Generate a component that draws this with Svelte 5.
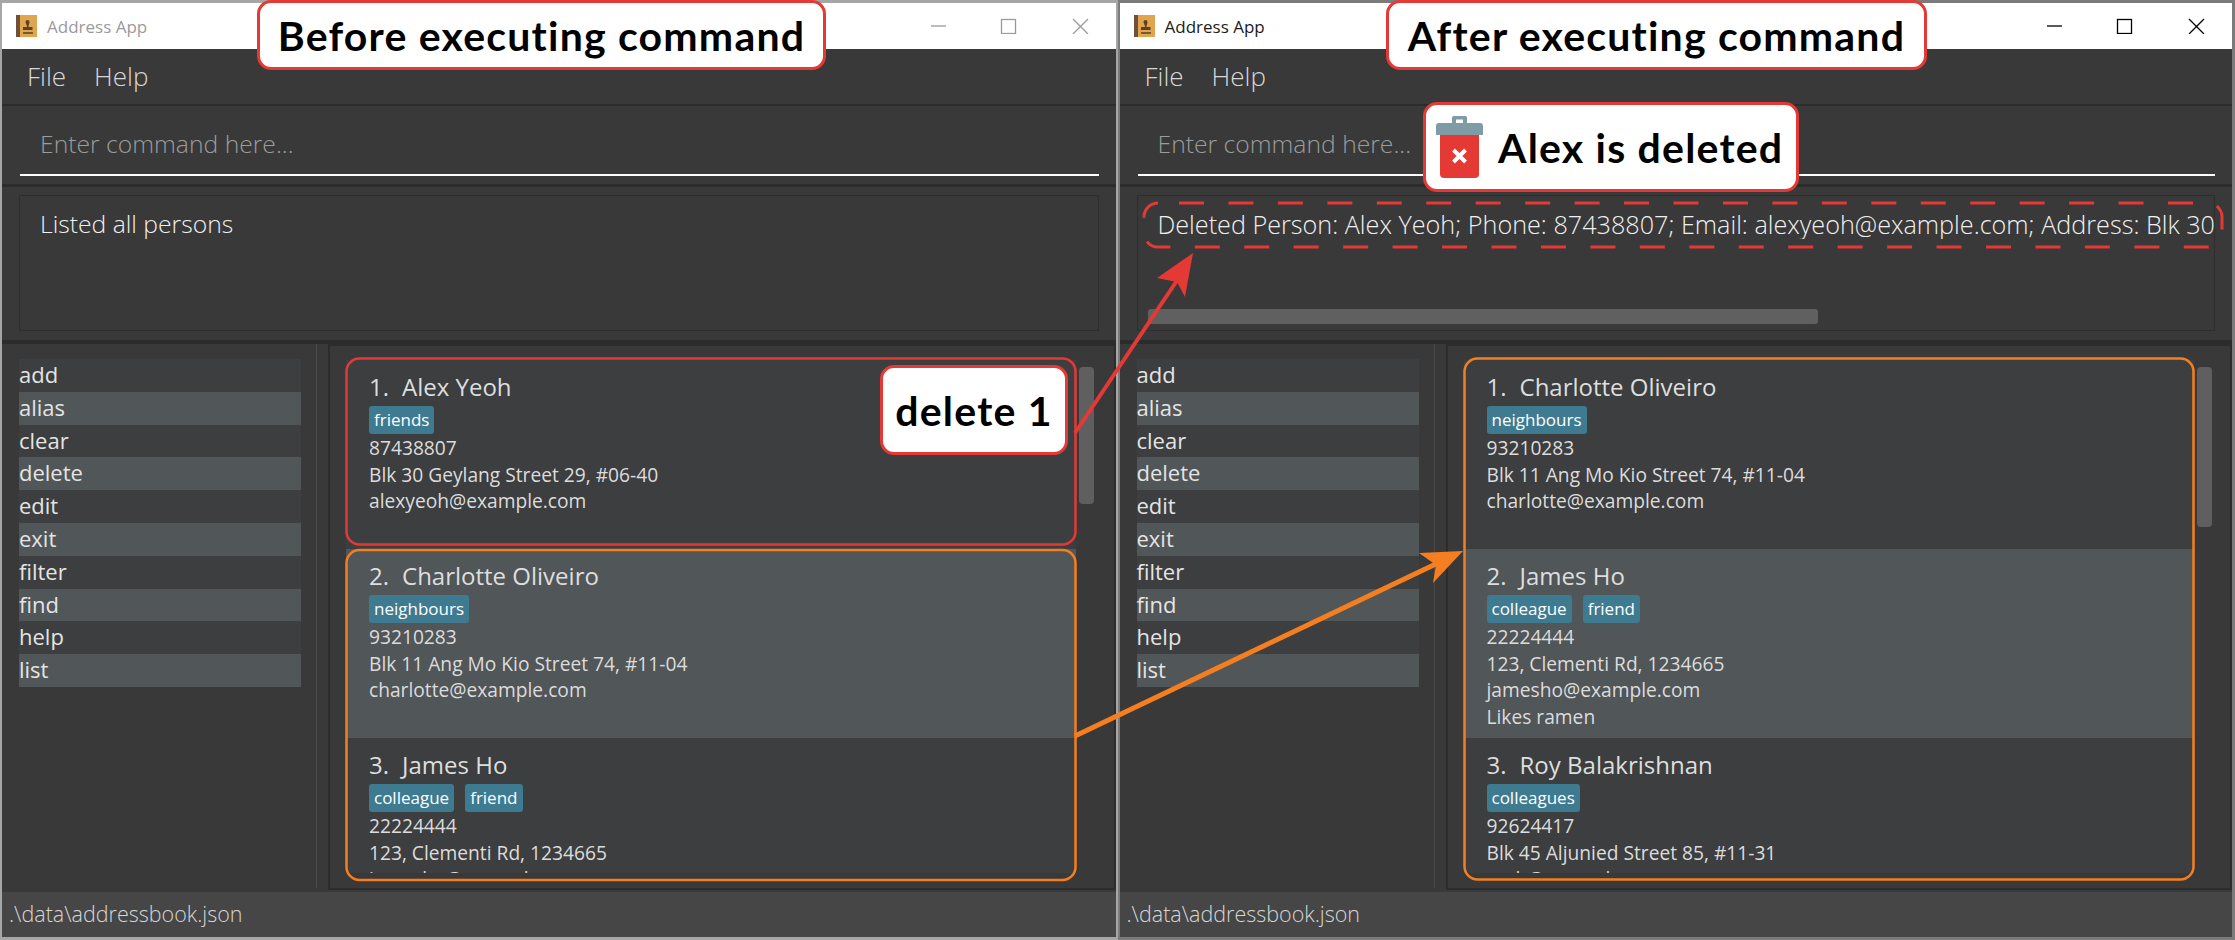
<script lang="ts">
    type Person = { name: string; tags: string[]; lines: string[] };

    const commands = ['add', 'alias', 'clear', 'delete', 'edit', 'exit', 'filter', 'find', 'help', 'list'];

    const alex: Person = {
        name: 'Alex Yeoh',
        tags: ['friends'],
        lines: ['87438807', 'Blk 30 Geylang Street 29, #06-40', 'alexyeoh@example.com']
    };
    const charlotte: Person = {
        name: 'Charlotte Oliveiro',
        tags: ['neighbours'],
        lines: ['93210283', 'Blk 11 Ang Mo Kio Street 74, #11-04', 'charlotte@example.com']
    };
    const james: Person = {
        name: 'James Ho',
        tags: ['colleague', 'friend'],
        lines: ['22224444', '123, Clementi Rd, 1234665', 'jamesho@example.com', 'Likes ramen']
    };
    const roy: Person = {
        name: 'Roy Balakrishnan',
        tags: ['colleagues'],
        lines: ['92624417', 'Blk 45 Aljunied Street 85, #11-31', 'royb@example.com']
    };

    const before = {
        active: false,
        message: 'Listed all persons',
        scrolled: false,
        thumb: 137,
        people: [alex, charlotte, james]
    };
    const after = {
        active: true,
        message: 'Deleted Person: Alex Yeoh; Phone: 87438807; Email: alexyeoh@example.com; Address: Blk 30 Geylang Street 29, #06-40; Tags: [friends]',
        scrolled: true,
        thumb: 160,
        people: [charlotte, james, roy]
    };
</script>

{#snippet appWindow(win)}
    <section class="window" class:active={win.active}>
        <header class="titlebar">
            <svg class="app-icon" viewBox="0 0 21 22" width="21" height="22">
                <rect width="21" height="22" fill="#e0a64f" />
                <rect width="4" height="22" fill="#6e5138" />
                <path d="M11.5 5a2 2 0 0 1 2 2c0 1.5-1 2.500-1 5h4v3H7v-3h4c0-2.500-1.500-3.500-1.500-5a2 2 0 0 1 2-2z" fill="#5d4321" />
                <rect x="7" y="17" width="10" height="2" fill="#7b5a2d" />
            </svg>
            <span class="app-title">Address App</span>
            <svg class="controls" viewBox="0 0 158 16" width="158" height="16">
                <path d="M0 8h15" />
                <rect x="70.500" y="1.500" width="14" height="14" />
                <path d="M142 1l15 15M157 1l-15 15" />
            </svg>
        </header>

        <nav class="menubar">
            <span>File</span>
            <span>Help</span>
        </nav>

        <div class="command">
            <div class="command-input">Enter command here...</div>
        </div>

        <div class="result">
            <div class="result-box">
                <div class="message">{win.message}</div>
                {#if win.scrolled}<div class="hthumb"></div>{/if}
            </div>
        </div>

        <div class="lower">
            <aside class="sidebar">
                {#each commands as c}
                    <div class="cmd">{c}</div>
                {/each}
            </aside>
            <div class="panel">
                <div class="people">
                    {#each win.people as p, i}
                        <article class="person">
                            <div class="name"><span class="num">{i + 1}.</span><span>{p.name}</span></div>
                            <div class="tags">
                                {#each p.tags as t}<span class="tag">{t}</span>{/each}
                            </div>
                            {#each p.lines as line}<div class="line">{line}</div>{/each}
                        </article>
                    {/each}
                </div>
                <div class="vthumb" style="height: {win.thumb}px"></div>
            </div>
        </div>

        <footer class="status">.\data\addressbook.json</footer>
    </section>
{/snippet}

<main class="page">
    {@render appWindow(before)}
    {@render appWindow(after)}

    <!-- annotations drawn over the two windows -->
    <svg class="marks" viewBox="0 0 2235 940" width="2235" height="940">
        <rect class="box red" x="346.500" y="358.500" width="729" height="186" rx="13" />
        <rect class="box orange" x="346.500" y="550" width="729" height="330" rx="13" />
        <rect class="box orange" x="1464.500" y="358.500" width="729" height="521" rx="13" />
        <rect class="dashed" x="1144" y="203" width="1078" height="44" rx="14" />

        <path class="arrow red" d="M1075 433L1180 276" />
        <polygon fill="#e53935" points="1193,253 1157,278 1177,282 1185,297" />
        <path class="arrow orange thick" d="M1075 736L1440 562" />
        <polygon fill="#f57f20" points="1463,551 1419,553 1436,565 1433,583" />
    </svg>

    <div class="callout top before">Before executing command</div>
    <div class="callout top after">After executing command</div>
    <div class="callout deleted">
        <svg viewBox="0 0 47 62" width="47" height="62">
            <path d="M16 7V1.500A1.500 1.500 0 0 1 17.500 0h12A1.500 1.500 0 0 1 31 1.500V7h-4V3.500h-7V7z" fill="#7f9ba6" />
            <path d="M3 7h41a3 3 0 0 1 3 3v9H0v-9a3 3 0 0 1 3-3z" fill="#7f9ba6" />
            <path d="M4 19h39v39a4 4 0 0 1-4 4H8a4 4 0 0 1-4-4z" fill="#e53935" />
            <path d="M17.500 34l12 12M29.500 34l-12 12" stroke="#fff" stroke-width="4" fill="none" />
        </svg>
        <span>Alex is deleted</span>
    </div>
    <div class="callout command-note">delete 1</div>
</main>

<style>
    :global(body) {
        margin: 0;
        background: #fff;
    }
    .page {
        position: relative;
        display: flex;
        width: 2235px;
        height: 940px;
        overflow: hidden;
        font-family: "Open Sans", "Noto Sans", sans-serif;
    }

    .window {
        box-sizing: border-box;
        flex: 0 0 1117.500px;
        height: 940px;
        display: grid;
        grid-template-rows: 46px 57px 81px 157px 548px 45px;
        border: solid #a6a6a6;
        border-width: 3px 2px 3px 2px;
        background: #393939;
        color: #e2e2e2;
    }
    .window.active {
        border-color: #7b7b7b;
        border-right-width: 3px;
    }

    .titlebar {
        display: flex;
        align-items: center;
        padding-left: 14px;
        background: #fff;
    }
    .app-icon {
        flex: none;
    }
    .app-title {
        margin-left: 10px;
        font-size: 17px;
        color: #9a9a9a;
    }
    .active .app-title {
        color: #1b1b1b;
    }
    .controls {
        margin-left: auto;
        margin-right: 27px;
        fill: none;
        stroke: #9a9a9a;
        stroke-width: 1.300;
    }
    .active .controls {
        stroke: #000;
    }

    .menubar {
        display: flex;
        gap: 28px;
        align-items: center;
        padding-left: 25px;
        padding-bottom: 2px;
        border-bottom: 2px solid #2c2c2c;
        font-size: 26px;
        font-weight: 300;
        color: #d8d8d8;
    }

    .command {
        padding: 0 17px 0 18px;
        border-bottom: 3px solid #2c2c2c;
    }
    .command-input {
        box-sizing: border-box;
        height: 70px;
        padding: 24px 0 0 20px;
        border-bottom: 2px solid #fff;
        font-size: 24.700px;
        font-weight: 300;
        line-height: 28px;
        color: #9c9c9c;
    }

    .result {
        padding: 8px 17px 9px 17px;
        border-bottom: 4px solid #2c2c2c;
    }
    .result-box {
        position: relative;
        box-sizing: border-box;
        height: 136px;
        padding: 13px 0 0 20px;
        border: 1px solid #2e2e2e;
        overflow: hidden;
    }
    .message {
        width: 1056px;
        overflow: hidden;
        white-space: nowrap;
        font-size: 24.700px;
        font-weight: 300;
        line-height: 30px;
        color: #f0f0f0;
    }
    .active .message {
        font-size: 25.200px;
    }
    .hthumb {
        position: absolute;
        left: 10px;
        bottom: 6px;
        width: 670px;
        height: 15px;
        border-radius: 3px;
        background: #606060;
    }

    .lower {
        display: flex;
    }
    .sidebar {
        box-sizing: border-box;
        flex: 0 0 315px;
        height: 544px;
        padding: 15px 15px 0 17px;
        border-right: 1px solid #4b4b4b;
    }
    .cmd {
        height: 32.800px;
        font-size: 22px;
        line-height: 31px;
        color: #e4e4e4;
        background: #3c3e3f;
    }
    .cmd:nth-child(even) {
        background: #515658;
    }

    .panel {
        box-sizing: border-box;
        flex: 1;
        display: flex;
        align-items: flex-start;
        height: 546px;
        margin-left: 11px;
        padding: 14px 0 0 16px;
        border: 2px solid #2c2c2c;
        border-left-width: 2px;
    }
    .people {
        flex: 0 0 730px;
        height: 513px;
        overflow: hidden;
    }
    .person {
        box-sizing: border-box;
        height: 189px;
        padding: 11px 0 0 23px;
        background: #3c3e3f;
    }
    .person:nth-child(even) {
        background: #515658;
    }
    .name {
        display: flex;
        gap: 13px;
        height: 35px;
        font-size: 24px;
        font-weight: 500;
        line-height: 32px;
        color: #dedede;
    }
    .tags {
        display: flex;
        gap: 11px;
        height: 28px;
    }
    .tag {
        padding: 0 5px;
        border-radius: 3px;
        background: #3e7b91;
        font-size: 17px;
        line-height: 27px;
        color: #fff;
    }
    .line {
        height: 26.600px;
        font-size: 19.200px;
        line-height: 28px;
        color: #dcdcdc;
    }
    .vthumb {
        flex: none;
        width: 15px;
        margin: 7px 0 0 3px;
        border-radius: 4px;
        background: #5f5f5f;
    }

    .status {
        padding-left: 7px;
        background: #464646;
        font-size: 21.500px;
        font-weight: 300;
        line-height: 43px;
        color: #d6d6d6;
    }

    .marks {
        position: absolute;
        top: 0;
        left: 0;
        pointer-events: none;
    }
    .box {
        fill: none;
        stroke-width: 2.500;
    }
    .box.red {
        stroke: #e53935;
    }
    .box.orange {
        stroke: #f57f20;
    }
    .dashed {
        fill: none;
        stroke: #e53935;
        stroke-width: 3;
        stroke-dasharray: 25 24.450;
        stroke-dashoffset: 28.450;
    }
    .arrow {
        fill: none;
        stroke-width: 4;
    }
    .arrow.red {
        stroke: #e53935;
    }
    .arrow.orange {
        stroke: #f57f20;
    }
    .arrow.thick {
        stroke-width: 5;
    }

    .callout {
        position: absolute;
        box-sizing: border-box;
        display: flex;
        align-items: center;
        justify-content: center;
        border: 3px solid #e53935;
        border-radius: 14px;
        background: #fff;
        font-family: Lato, "Open Sans", sans-serif;
        font-weight: 700;
        font-size: 41px;
        letter-spacing: 1.200px;
        color: #000;
    }
    .callout.top {
        top: 0;
        height: 70px;
    }
    .before {
        left: 257px;
        width: 569px;
    }
    .after {
        left: 1386px;
        width: 541px;
    }
    .deleted {
        left: 1423px;
        top: 102px;
        width: 376px;
        height: 90px;
        justify-content: flex-start;
        gap: 15px;
        padding-left: 10px;
    }
    .command-note {
        left: 880px;
        top: 365px;
        width: 188px;
        height: 90px;
    }
</style>
